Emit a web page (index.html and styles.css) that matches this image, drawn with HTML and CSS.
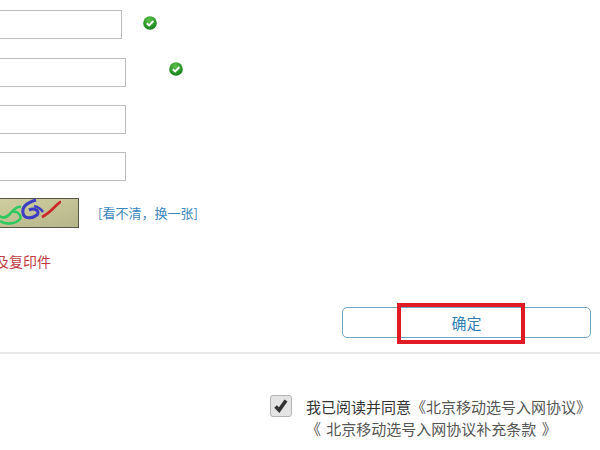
FILE: index.html
```html
<!DOCTYPE html>
<html lang="zh-CN">
<head>
<meta charset="utf-8">
<title>确认</title>
<link rel="stylesheet" href="styles.css">
</head>
<body>
<main class="page">
  <form class="form">
    <div class="row row-one">
      <input class="field field-short" type="text">
      <svg class="ok ok-one" viewBox="0 0 14 14"><defs><radialGradient id="g1" cx="45%" cy="30%" r="75%"><stop offset="0" stop-color="#5fc24a"/><stop offset="1" stop-color="#0d7a16"/></radialGradient></defs><circle cx="7" cy="7" r="6.8" fill="url(#g1)"/><path d="M3.8 7.2 6.1 9.4 10.4 5" fill="none" stroke="#fff" stroke-width="2"/></svg>
    </div>
    <div class="row row-two">
      <input class="field" type="text">
      <svg class="ok ok-two" viewBox="0 0 14 14"><defs><radialGradient id="g2" cx="45%" cy="30%" r="75%"><stop offset="0" stop-color="#5fc24a"/><stop offset="1" stop-color="#0d7a16"/></radialGradient></defs><circle cx="7" cy="7" r="6.8" fill="url(#g2)"/><path d="M3.8 7.2 6.1 9.4 10.4 5" fill="none" stroke="#fff" stroke-width="2"/></svg>
    </div>
    <div class="row row-three"><input class="field" type="text"></div>
    <div class="row row-four"><input class="field" type="text"></div>
    <div class="row row-captcha">
      <svg class="captcha" viewBox="0 0 119 30" preserveAspectRatio="none">
        <defs><linearGradient id="cg" x1="0" x2="1" y1="0" y2="1"><stop offset="0" stop-color="#d3d3a4"/><stop offset="1" stop-color="#b5b58a"/></linearGradient></defs>
        <rect x="0.5" y="0.5" width="118" height="29" fill="url(#cg)" stroke="#55554a"/>
        <path d="M38 17C42 21 46 20 50 16 54 11 58 8 61 9" fill="none" stroke="#2cc95f" stroke-width="2.6"/>
        <path d="M40 23C46 27 56 26 60 21 62 17 57 13 53 14" fill="none" stroke="#2cc95f" stroke-width="2.6"/>
        <path d="M76 2C66 5 62 10 63 15 64 21 72 21 77 17 80 14 76 9 69 12" fill="none" stroke="#3c3cc4" stroke-width="3"/>
        <path d="M74 8C78 9 81 11 83 14" fill="none" stroke="#3c3cc4" stroke-width="2.4"/>
        <path d="M82 19C90 15 94 9 99 5 100 4 100 4 101 4" fill="none" stroke="#cc2428" stroke-width="2.6"/>
      </svg>
      <a class="refresh">[看不清，换一张]</a>
    </div>
    <p class="notice">须携带身份证原件及复印件</p>
    <div class="actions">
      <button class="submit" type="button"><span class="submit-label">确定</span></button>
    </div>
  </form>
  <hr class="divider">
  <section class="agree">
    <span class="check"><svg viewBox="0 0 22 22" class="tick"><path d="M5 11.5 9 15.5 16.5 5" fill="none" stroke="#333" stroke-width="4"/></svg></span>
    <div class="agree-text">
      <p class="agree-line">我已阅读并同意<a class="doc">《北京移动选号入网协议》</a></p>
      <p class="agree-line second"><a class="doc">《 北京移动选号入网协议补充条款 》</a></p>
    </div>
  </section>
</main>
</body>
</html>
```

FILE: styles.css
```css
*, *::after { box-sizing: border-box; }
html, body { margin: 0; padding: 0; background: #fff; }
.page {
  width: 600px;
  height: 450px;
  overflow: hidden;
  font-family: "Noto Sans CJK SC", "Liberation Sans", sans-serif;
  font-size: 14px;
}
.form { margin-left: -40px; width: 640px; padding-top: 10px; }
.row { display: flex; align-items: center; }
.field {
  display: block;
  width: 166px;
  height: 29px;
  border: 1px solid #bcbcbc;
  background: #fff;
  padding: 0;
}
.field-short { width: 162px; }
.ok { width: 14px; height: 14px; flex: none; }
.ok-one { margin-left: 21px; margin-top: -3px; }
.ok-two { margin-left: 43px; margin-top: -8px; }
.row-two { margin-top: 19px; }
.row-three { margin-top: 18px; }
.row-four { margin-top: 18px; }
.row-captcha { margin-top: 17px; height: 30px; }
.captcha { width: 119px; height: 30px; flex: none; }
.refresh { color: #3b86bd; font-size: 13px; margin-left: 19px; margin-top: -2px; white-space: nowrap; }
.notice {
  margin: 23px 0 0;
  height: 20px;
  line-height: 20px;
  color: #bf3a42;
  font-size: 14px;
  text-align: right;
  width: 91px;
  white-space: nowrap;
  direction: rtl;
}
.actions { display: flex; margin-top: 36px; padding-left: 382px; }
.submit {
  position: relative;
  width: 249px;
  height: 31px;
  border: 1px solid #6fa9c4;
  border-radius: 5px;
  background: #fff;
  padding: 0;
  color: #2f7fb5;
  font: inherit;
  font-size: 15px;
}
.submit::after {
  content: "";
  position: absolute;
  left: 54px;
  top: -5px;
  width: 128px;
  height: 41px;
  border: 4px solid #e01b24;
}
.submit-label { position: relative; }
.divider { border: 0; border-top: 2px solid #e8e8e8; margin: 14px 0 0; }
.agree { display: flex; padding: 41px 0 0 270px; }
.check {
  flex: none;
  width: 22px;
  height: 22px;
  border: 1px solid #b5b5b5;
  border-radius: 3px;
  background: #e4e4e4;
  display: block;
}
.tick { display: block; width: 20px; height: 20px; }
.agree-text { margin-left: 14px; }
.agree-line { margin: 0; line-height: 22px; font-size: 15px; color: #333; white-space: nowrap; margin-top: 1px; }
.agree-line.second { margin-top: 0; word-spacing: 2px; }
.doc { color: #555; }
```
